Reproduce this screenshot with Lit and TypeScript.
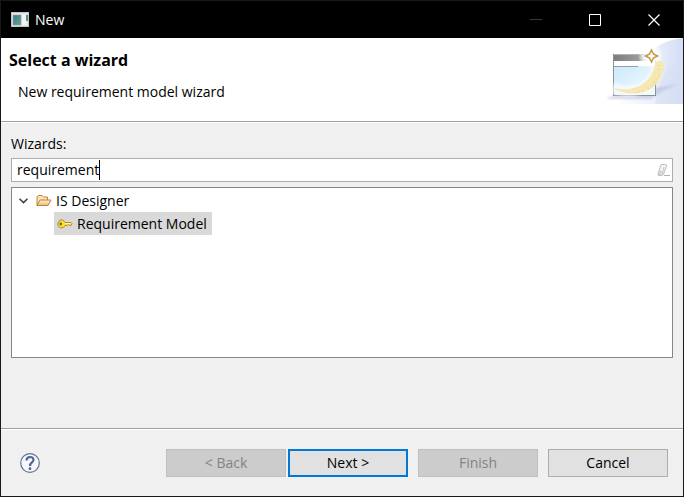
import { LitElement, html, css, svg } from "lit";
import { customElement, state } from "lit/decorators.js";

const appIcon = svg`<svg width="20" height="16" viewBox="0 0 20 16" aria-hidden="true">
  <defs><linearGradient id="pane" x1="0" y1="0" x2="1" y2="1"><stop offset="0" stop-color="#4a74a4"/><stop offset="1" stop-color="#58ac7c"/></linearGradient></defs>
  <rect x="1.500" y="0.500" width="17" height="14" fill="#e9e9ec" stroke="#c4c4c8"/>
  <rect x="3" y="3" width="8" height="10" fill="url(#pane)" stroke="#88a9a3" stroke-width="0.600"/>
  <rect x="12" y="3" width="4" height="10" fill="#f4f4f4"/>
  <rect x="16" y="3" width="2" height="6" fill="url(#pane)"/>
</svg>`;

const bannerArt = svg`<svg width="76" height="66" viewBox="0 0 76 66" aria-hidden="true">
  <defs>
    <linearGradient id="sky" x1="0" y1="0" x2="1" y2="0"><stop offset="0" stop-color="#fff"/><stop offset="0.500" stop-color="#eef2fb"/><stop offset="1" stop-color="#d3ddf4"/></linearGradient>
    <linearGradient id="bar" x1="0" y1="0" x2="1" y2="0"><stop offset="0" stop-color="#7d7d7d"/><stop offset="0.600" stop-color="#9b9b9b"/><stop offset="0.900" stop-color="#fff"/></linearGradient>
    <linearGradient id="glass" x1="0" y1="0" x2="1" y2="1"><stop offset="0" stop-color="#cde9fb"/><stop offset="1" stop-color="#f3fbff"/></linearGradient>
    <radialGradient id="glow"><stop offset="0.400" stop-color="#fff"/><stop offset="1" stop-color="#fff" stop-opacity="0"/></radialGradient>
    <filter id="soft" x="-20%" y="-20%" width="140%" height="140%"><feGaussianBlur stdDeviation="1"/></filter>
    <filter id="edge" x="-20%" y="-20%" width="140%" height="140%"><feGaussianBlur stdDeviation="0.500"/></filter>
  </defs>
  <path d="M76 0C60 2 46 8 38 20L10 66H76Z" fill="url(#sky)"/>
  <path d="M76 22C62 26 52 39 48 66H76Z" fill="#d5def4" opacity="0.500"/>
  <path d="M0 60L10 57 48 50 70 46 54 54 44 61 0 61Z" fill="#b4bad6" opacity="0.550" filter="url(#soft)"/>
  <rect x="6.500" y="16.500" width="42" height="41" fill="#fff" stroke="#8b9098"/>
  <rect x="7" y="17" width="41" height="6" fill="url(#bar)"/>
  <path d="M7 16.500H36" stroke="#b4b4b4"/>
  <rect x="7" y="28" width="41" height="29" fill="url(#glass)"/>
  <path d="M7 28.500H31" stroke="#93a0aa"/>
  <circle cx="44" cy="18" r="13" fill="url(#glow)"/>
  <path d="M5 49C18 57 46 56 52 24" fill="none" stroke="#fff" stroke-width="11" opacity="0.600" filter="url(#soft)"/>
  <path d="M4 49C20 55 44 50 48 26C49 21 57 22 57 27C55 54 27 63 4 49Z" fill="#f7e7b2" filter="url(#edge)"/>
  <path d="M52 27L51 35M52 37L47 44M48 45L40 51M36 53L28 55" stroke="#ead797" stroke-width="2" stroke-dasharray="1 3"/>
  <path d="M44.500 12L46.500 16 50.500 18 46.500 20 44.500 24 42.500 20 38.500 18 42.500 16Z" fill="#fffbe8" stroke="#bd9a42" stroke-width="1.500"/>
</svg>`;

const eraser = svg`<svg width="14" height="14" viewBox="0 0 14 14" aria-hidden="true">
  <path d="M6 1.500H9.500Q11 1.500 10.500 3L7.500 11Q7 12.500 5.500 12.500H3Q1.500 12.500 2 11L4.500 3Q5 1.500 6 1.500Z" fill="#f5f5f5" stroke="#bdbdbd"/>
  <path d="M3 8.500H7L5.500 12H2.500ZM8 4L7 8" fill="#dcdcdc" stroke="#cacaca"/>
  <path d="M8 12.500H14" stroke="#b0b0b0"/>
</svg>`;

const chevron = svg`<svg width="9" height="6" viewBox="0 0 9 6" aria-hidden="true"><path d="M0.500 0.800L4.500 4.600 8.500 0.800" fill="none" stroke="#404040" stroke-width="1.500"/></svg>`;

const folder = svg`<svg width="16" height="13" viewBox="0 0 16 13" aria-hidden="true">
  <defs><linearGradient id="flap" x1="0" y1="0" x2="0" y2="1"><stop offset="0" stop-color="#fff0c6"/><stop offset="1" stop-color="#efbd70"/></linearGradient></defs>
  <path d="M1 11.500V3L2.500 1.500H6L7.500 3H11.500V6" fill="#fbe5b4" stroke="#bd813e"/>
  <path d="M1 11.500L4 6H15L12 11.500Z" fill="url(#flap)" stroke="#bd813e" stroke-linejoin="round"/>
</svg>`;

const key = svg`<svg width="16" height="10" viewBox="0 0 16 10" aria-hidden="true">
  <path d="M2.500 1.500L5 .7 7.500 2.500 8 3.500H14L15 4.500 14 6.500H12.500L11.500 5.500 10.500 6.500H8L6.500 8.500 4 9 1.500 7.500.7 5Z" fill="#f7df39" stroke="#b68b20"/>
  <path d="M8 4.500H14" stroke="#fff6a2"/>
  <ellipse cx="3.800" cy="5" rx="1.200" ry="1.400" fill="#765b1d"/>
</svg>`;

@customElement("app-root")
export class AppRoot extends LitElement {
  @state() private filter = "requirement";

  static styles = css`
    :host { display: block; font: 14px/20px "Open Sans", "Noto Sans", sans-serif; color: #000; }
    * { box-sizing: border-box; }
    svg { display: block; flex: none; }
    .window { display: flex; flex-direction: column; min-height: 100vh; border: 1px solid #181818; background: #f0f0f0; }
    .titlebar { display: flex; align-items: center; height: 37px; padding-left: 9px; background: #000; color: #fff; }
    .title { flex: 1; padding-left: 5px; }
    .caption { display: grid; place-items: center; width: 59px; height: 36px; padding: 0; border: 0; background: none; color: #fff; }
    .caption:disabled { color: #3a3a3a; }
    .banner { display: flex; justify-content: space-between; height: 84px; background: #fff; border-bottom: 1px solid #a0a0a0; }
    .heading { padding: 12px 8px; }
    h1 { margin: 0; font-size: 16px; line-height: 20px; font-weight: 700; }
    .heading p { margin: 12px 0 0 9px; }
    .content { display: flex; flex-direction: column; flex: 1; padding: 11px 10px 70px; border-top: 1px solid #fff; }
    .label { margin-bottom: 4px; }
    .field { display: flex; align-items: center; height: 24px; margin-bottom: 5px; padding: 0 2px 0 5px; border: 1px solid #abadb3; background: #fff; }
    .field input { field-sizing: content; min-width: 1px; height: 20px; padding: 0; border: 0; outline: 0; background: none; font: inherit; color: inherit; caret-color: transparent; }
    .caret { width: 1px; height: 20px; background: #000; }
    .clear { margin-left: auto; padding: 0; border: 0; background: none; }
    .tree { flex: 1; margin: 0; padding: 1px 7px; border: 1px solid #828790; background: #fff; list-style: none; }
    .tree ul { margin: 0; padding: 0 0 0 35px; list-style: none; }
    .row { display: flex; align-items: center; width: fit-content; height: 23px; gap: 4px; }
    .twisty { padding: 0 4px 0 0; border: 0; background: none; }
    .selected { padding: 0 5px 0 3px; background: #d9d9d9; }
    .footer { display: flex; align-items: center; height: 68px; padding: 0 15px 0 19px; border-top: 1px solid #a0a0a0; box-shadow: inset 0 1px #fff; }
    .help { margin-right: auto; padding: 0; border: 0; background: none; }
    .actions { display: flex; gap: 10px; }
    .pair { display: flex; gap: 2px; }
    .push { width: 120px; height: 28px; padding: 0; border: 1px solid #adadad; background: #e1e1e1; font: inherit; color: #000; }
    .push:disabled { background: #ccc; border-color: #bfbfbf; color: #838383; }
    .primary { border: 2px solid #0078d7; }
  `;

  private onInput(e: InputEvent) {
    this.filter = (e.target as HTMLInputElement).value;
  }

  render() {
    return html`<div class="window">
      <header class="titlebar">
        ${appIcon}<span class="title">New</span>
        <button class="caption" aria-label="Minimize" disabled><svg width="12" height="12"><path d="M0 5.500H12" stroke="currentColor"/></svg></button>
        <button class="caption" aria-label="Maximize"><svg width="12" height="12"><path d="M.5 .5H11.500V11.500H.5Z" fill="none" stroke="currentColor"/></svg></button>
        <button class="caption" aria-label="Close"><svg width="12" height="12"><path d="M.5 .5L11.500 11.500M11.500 .5L.5 11.500" stroke="currentColor" stroke-width="1.200"/></svg></button>
      </header>
      <section class="banner">
        <div class="heading"><h1>Select a wizard</h1><p>New requirement model wizard</p></div>
        ${bannerArt}
      </section>
      <main class="content">
        <label class="label" for="filter">Wizards:</label>
        <div class="field">
          <input id="filter" type="text" .value=${this.filter} @input=${this.onInput} />
          <span class="caret"></span>
          <button class="clear" aria-label="Clear" @click=${() => (this.filter = "")}>${eraser}</button>
        </div>
        <ul class="tree" role="tree">
          <li role="treeitem" aria-expanded="true">
            <div class="row"><button class="twisty" aria-label="Collapse">${chevron}</button>${folder}<span>IS Designer</span></div>
            <ul role="group">
              <li role="treeitem" aria-selected="true"><div class="row selected">${key}<span>Requirement Model</span></div></li>
            </ul>
          </li>
        </ul>
      </main>
      <footer class="footer">
        <button class="help" aria-label="Help"><svg width="20" height="20" viewBox="0 0 20 20">
          <circle cx="10" cy="10" r="9.300" fill="#f7f8fb" stroke="#5d7198" stroke-width="1.200"/>
          <path d="M6.500 7.500C6.500 2.800 13.700 3 13.500 7C13.400 9.500 10 9.500 10 13" fill="none" stroke="#506590" stroke-width="2.200"/>
          <circle cx="10" cy="15.700" r="1.400" fill="#506590"/>
        </svg></button>
        <div class="actions">
          <div class="pair"><button class="push" disabled>&lt; Back</button><button class="push primary">Next &gt;</button></div>
          <button class="push" disabled>Finish</button>
          <button class="push">Cancel</button>
        </div>
      </footer>
    </div>`;
  }
}
